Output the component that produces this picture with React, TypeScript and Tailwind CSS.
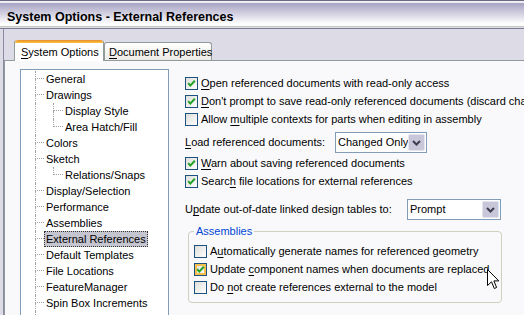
import React from "react";

const DOT = "border-dotted border-[#a0a0a0]";

type TreeItem = { label: string; level: 1 | 2; last?: boolean; selected?: boolean };

const TREE: TreeItem[] = [
  { label: "General", level: 1 },
  { label: "Drawings", level: 1 },
  { label: "Display Style", level: 2 },
  { label: "Area Hatch/Fill", level: 2, last: true },
  { label: "Colors", level: 1 },
  { label: "Sketch", level: 1 },
  { label: "Relations/Snaps", level: 2, last: true },
  { label: "Display/Selection", level: 1 },
  { label: "Performance", level: 1 },
  { label: "Assemblies", level: 1 },
  { label: "External References", level: 1, selected: true },
  { label: "Default Templates", level: 1 },
  { label: "File Locations", level: 1 },
  { label: "FeatureManager", level: 1 },
  { label: "Spin Box Increments", level: 1 },
  { label: "View Rotation", level: 1 },
];

function TreeRow({ item }: { item: TreeItem }) {
  return (
    <div className="flex h-[16px] shrink-0">
      {item.level === 2 && <div className={`w-[18px] border-l ${DOT}`} />}
      <div className={`flex flex-col ${item.level === 2 ? "w-[10px]" : "w-[9px]"}`}>
        <div className={`h-[8px] border-b border-l ${DOT}`} />
        {item.last ? <div className="h-[8px]" /> : <div className={`h-[8px] border-l ${DOT}`} />}
      </div>
      <div
        className={`h-[16px] whitespace-nowrap border px-[1px] leading-[14px] ${
          item.selected ? "border-dotted border-[#333] bg-[#c5c5cf]" : "border-transparent"
        }`}
      >
        {item.label}
      </div>
    </div>
  );
}

function Check({ checked, hover }: { checked?: boolean; hover?: boolean }) {
  return (
    <svg width="13" height="13" viewBox="0 0 13 13" className="shrink-0">
      <defs>
        <linearGradient id="cbg" x1="0" y1="0" x2="1" y2="1">
          <stop offset="0" stopColor="#dcdcd7" />
          <stop offset="1" stopColor="#ffffff" />
        </linearGradient>
      </defs>
      <rect x="0.5" y="0.5" width="12" height="12" fill="url(#cbg)" stroke="#1c5180" />
      {hover && <rect x="2" y="2" width="9" height="9" fill="none" stroke="#f7bf4d" strokeWidth="2" />}
      {checked && (
        <polyline points="3.2,6.2 5.3,8.6 9.8,3.8" fill="none" stroke="#21a121" strokeWidth="2" />
      )}
    </svg>
  );
}

function U({ children }: { children: React.ReactNode }) {
  return <span className="underline underline-offset-[2px]">{children}</span>;
}

function CheckRow({
  checked,
  hover,
  children,
}: {
  checked?: boolean;
  hover?: boolean;
  children: React.ReactNode;
}) {
  return (
    <div className="flex h-[18px] shrink-0 items-center gap-[3px] whitespace-nowrap">
      <Check checked={checked} hover={hover} />
      <span>{children}</span>
    </div>
  );
}

function Combo({ value, width }: { value: string; width: string }) {
  return (
    <div className={`flex h-[21px] shrink-0 items-center border border-[#7f9db9] bg-white ${width}`}>
      <span className="flex-1 pl-[2px] whitespace-nowrap">{value}</span>
      <div className="mr-px flex h-[17px] w-[17px] items-center justify-center rounded-[2px] border border-[#e4e3ee] bg-[#c8c7da]">
        <svg width="9" height="6" viewBox="0 0 9 6">
          <polyline points="1,1 4.5,4.5 8,1" fill="none" stroke="#3d3d4d" strokeWidth="2" />
        </svg>
      </div>
    </div>
  );
}

export default function App() {
  return (
    <div className="relative flex h-[315px] w-[524px] flex-col overflow-hidden bg-[#dddbe5] font-['Liberation_Sans',Arial,sans-serif] text-[11px] text-black">
      <div className="h-[29px] shrink-0 bg-[linear-gradient(to_bottom,#6e6b84_0px,#6e6b84_1px,#eeeef3_1px,#eeeef3_3px,#a6a2c2_3px,#ffffff_24px,#fafafa_26px,#c6cbc0_26px,#c6cbc0_27px,#dcdce4_27px,#dcdce4_28px,#7d7b93_28px,#7d7b93_29px)] pl-[7px] pt-[10px]">
        <div className="text-[12.5px] font-bold leading-[14px] whitespace-nowrap">
          System Options - External References
        </div>
      </div>

      <div className="ml-[3px] flex flex-1 flex-col border-l border-[#8c8aa0]">
        <div className="flex h-[21px] shrink-0 items-end pl-[10px] mt-[11px]">
          <div className="relative z-10 h-[21px] w-[90px] rounded-t-[3px] border-x border-[#919b9c] bg-white">
            <div className="h-[3px] rounded-t-[3px] bg-[linear-gradient(to_bottom,#e68b2c,#ffc73c)]" />
            <div className="pl-[6px] pt-[2px] leading-[14px] whitespace-nowrap">
              <U>S</U>ystem Options
            </div>
          </div>
          <div className="mb-px h-[18px] w-[108px] rounded-t-[3px] border-x border-t border-[#919b9c] bg-[linear-gradient(to_bottom,#ffffff,#ecebe6)] pl-[4px] pt-[2px] leading-[14px] whitespace-nowrap">
            <U>D</U>ocument Properties
          </div>
        </div>

        <div className="-mt-px flex flex-1 border-t border-l border-[#919b9c] bg-[#f9f9fb]">
          <div className="ml-[15px] mt-[8px] flex w-[149px] shrink-0 flex-col border border-[#7f9db9] bg-white pl-[14px] pt-px">
            {TREE.map((item) => (
              <TreeRow key={item.label} item={item} />
            ))}
          </div>

          <div className="ml-[16px] flex flex-col pt-[13px]">
            <CheckRow checked>
              <U>O</U>pen referenced documents with read-only access
            </CheckRow>
            <CheckRow checked>
              <U>D</U>on't prompt to save read-only referenced documents (discard changes)
            </CheckRow>
            <CheckRow>
              Allow <U>m</U>ultiple contexts for parts when editing in assembly
            </CheckRow>

            <div className="mt-[4px] flex h-[21px] shrink-0 items-center">
              <span className="w-[150px] whitespace-nowrap">
                <U>L</U>oad referenced documents:
              </span>
              <Combo value="Changed Only" width="w-[92px]" />
            </div>

            <div className="mt-[1px] flex flex-col">
              <CheckRow checked>
                <U>W</U>arn about saving referenced documents
              </CheckRow>
              <CheckRow checked>
                Searc<U>h</U> file locations for external references
              </CheckRow>
            </div>

            <div className="mt-[9px] flex h-[21px] shrink-0 items-center">
              <span className="w-[222px] whitespace-nowrap">
                U<U>p</U>date out-of-date linked design tables to:
              </span>
              <Combo value="Prompt" width="w-[94px]" />
            </div>

            <fieldset className="ml-[3px] mt-[5px] w-[314px] rounded-[4px] border border-[#d0d0bf] pb-[6px] pl-[5px] pt-[4px]">
              <legend className="px-[2px] leading-[13px] text-[#0046d5]">Assemblies</legend>
              <CheckRow>
                A<U>u</U>tomatically generate names for referenced geometry
              </CheckRow>
              <CheckRow checked hover>
                Update <U>c</U>omponent names when documents are replaced
              </CheckRow>
              <CheckRow>
                Do <U>n</U>ot create references external to the model
              </CheckRow>
            </fieldset>
          </div>
        </div>
      </div>

      <svg
        className="absolute left-[487px] top-[269px]"
        width="13"
        height="21"
        viewBox="0 0 13 21"
      >
        <path
          d="M0.5 0.5 L0.5 16.5 L4.5 12.8 L7.3 19.5 L9.6 18.5 L6.9 11.9 L11.8 11.9 Z"
          fill="#ffffff"
          stroke="#000000"
          strokeWidth="1"
          strokeLinejoin="miter"
        />
      </svg>
    </div>
  );
}
